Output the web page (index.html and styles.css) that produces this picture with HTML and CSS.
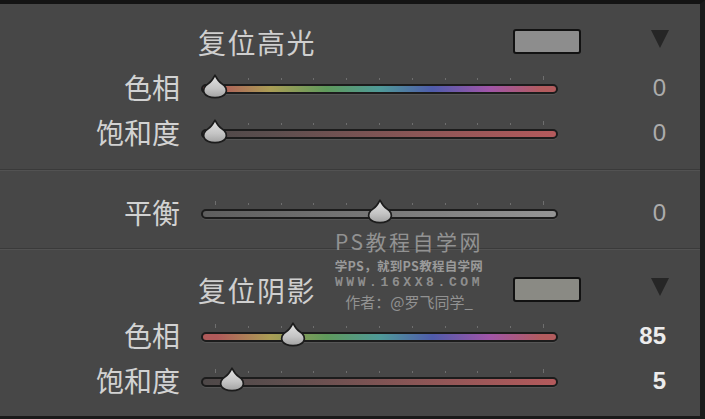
FILE: index.html
```html
<!DOCTYPE html>
<html lang="zh">
<head>
<meta charset="utf-8">
<link rel="stylesheet" href="styles.css">
</head>
<body>
<div class="panel">
  <section class="group g1">
    <div class="head">
      <span class="title">复位高光</span>
      <span class="swatch"></span>
      <span class="tri"></span>
    </div>
    <div class="row">
      <span class="label">色相</span>
      <div class="slider">
        <div class="ticks"><i class="tall"></i><i></i><i></i><i></i><i></i><i></i><i></i><i></i><i></i><i></i><i class="tall"></i></div>
        <div class="track hue"></div>
        <svg class="thumb" style="left:0px" viewBox="0 0 28 25" width="28" height="25"><use href="#thumb"/></svg>
      </div>
      <span class="val">0</span>
    </div>
    <div class="row">
      <span class="label">饱和度</span>
      <div class="slider">
        <div class="ticks"><i class="tall"></i><i></i><i></i><i></i><i></i><i></i><i></i><i></i><i></i><i></i><i class="tall"></i></div>
        <div class="track sat"></div>
        <svg class="thumb" style="left:0px" viewBox="0 0 28 25" width="28" height="25"><use href="#thumb"/></svg>
      </div>
      <span class="val">0</span>
    </div>
  </section>
  <div class="sep"></div>
  <section class="group g2">
    <div class="row">
      <span class="label">平衡</span>
      <div class="slider">
        <div class="ticks"><i class="tall"></i><i></i><i></i><i></i><i></i><i></i><i></i><i></i><i></i><i></i><i class="tall"></i></div>
        <div class="track bal"></div>
        <svg class="thumb" style="left:165px" viewBox="0 0 28 25" width="28" height="25"><use href="#thumb"/></svg>
      </div>
      <span class="val">0</span>
    </div>
  </section>
  <div class="sep"></div>
  <section class="group g3">
    <div class="head">
      <span class="title">复位阴影</span>
      <span class="swatch shadow"></span>
      <span class="tri"></span>
    </div>
    <div class="row">
      <span class="label">色相</span>
      <div class="slider">
        <div class="ticks"><i class="tall"></i><i></i><i></i><i></i><i></i><i></i><i></i><i></i><i></i><i></i><i class="tall"></i></div>
        <div class="track hue"></div>
        <svg class="thumb" style="left:78px" viewBox="0 0 28 25" width="28" height="25"><use href="#thumb"/></svg>
      </div>
      <span class="val strong">85</span>
    </div>
    <div class="row">
      <span class="label">饱和度</span>
      <div class="slider">
        <div class="ticks"><i class="tall"></i><i></i><i></i><i></i><i></i><i></i><i></i><i></i><i></i><i></i><i class="tall"></i></div>
        <div class="track sat"></div>
        <svg class="thumb" style="left:17px" viewBox="0 0 28 25" width="28" height="25"><use href="#thumb"/></svg>
      </div>
      <span class="val strong">5</span>
    </div>
  </section>

  <div class="watermark">
    <span class="wm1">PS教程自学网</span>
    <span class="wm2">学PS，就到PS教程自学网</span>
    <span class="wm3">WWW.16XX8.COM</span>
    <span class="wm4">作者：@罗飞同学_</span>
  </div>

  <svg class="defs" width="0" height="0">
    <defs>
      <linearGradient id="tg" x1="0" y1="0" x2="0" y2="1">
        <stop offset="0" stop-color="#e4e4e4"/>
        <stop offset="0.6" stop-color="#c4c4c4"/>
        <stop offset="1" stop-color="#a2a2a2"/>
      </linearGradient>
      <g id="thumb">
        <path d="M14 1.2 C15.5 4 17 7.5 20.5 9.5 C25 12 26.5 16 24.5 19.5 C22.5 22.6 18.5 23.6 14 23.6 C9.5 23.6 5.5 22.6 3.5 19.5 C1.5 16 3 12 7.5 9.5 C11 7.5 12.5 4 14 1.2 Z" fill="url(#tg)" stroke="#1c1c1c" stroke-width="1.7" stroke-linejoin="round"/>
      </g>
    </defs>
  </svg>
</div>
</body>
</html>
```

FILE: styles.css
```css
html, body {
  margin: 0;
  padding: 0;
  background: #474747;
}

.panel {
  position: relative;
  width: 705px;
  height: 419px;
  box-sizing: border-box;
  border-top: 4px solid #141414;
  border-right: 5px solid #1b1b1b;
  border-bottom: 3px solid #1a1a1a;
  background: #474747;
  overflow: hidden;
  font-family: "Noto Sans CJK SC", "Noto Sans", sans-serif;
}

.group {
  display: flex;
  flex-direction: column;
}

.g1 { padding: 15px 0 15px; }
.g2 { padding: 18px 0 14px; }
.g3 { padding: 17px 0 14px; }

.sep {
  height: 1px;
  background: #3a3a3a;
  border-bottom: 1px solid #525252;
}

.head {
  height: 45px;
  display: flex;
  align-items: center;
  padding-left: 198px;
}

.title {
  width: 315px;
  font-size: 28px;
  line-height: 1;
  color: #cfcfcf;
  letter-spacing: 1.5px;
}

.swatch {
  width: 68px;
  height: 25px;
  box-sizing: border-box;
  border: 2px solid #121212;
  border-radius: 3px;
  background: #8d8d8d;
}

.swatch.shadow {
  background: #8a8a84;
}

.tri {
  width: 0;
  height: 0;
  margin-left: 70px;
  margin-top: -5px;
  border-left: 9px solid transparent;
  border-right: 9px solid transparent;
  border-top: 18px solid #262626;
}

.row {
  height: 45px;
  display: grid;
  grid-template-columns: 201px 357px 108px;
  align-items: center;
}

.label {
  padding-right: 21px;
  text-align: right;
  font-size: 28px;
  line-height: 1;
  color: #d2d2d2;
}

.slider {
  position: relative;
  height: 45px;
  display: flex;
  flex-direction: column;
  justify-content: center;
  padding-bottom: 4px;
  box-sizing: border-box;
}

.ticks {
  display: flex;
  justify-content: space-between;
  align-items: flex-end;
  height: 4px;
  margin: 0 14px 4px 14px;
}

.ticks i {
  display: block;
  width: 1px;
  height: 2px;
  background: #6e6e6e;
}

.ticks i.tall {
  height: 4px;
}

.track {
  height: 10px;
  box-sizing: border-box;
  border: 2px solid #1c1c1c;
  border-radius: 5px;
  box-shadow: 0 1px 0 #555;
}

.track.hue {
  background: linear-gradient(to right,
    #b05a5a 0%, #b05a5a 4%, #aa9d55 19%, #5f9a5c 35%,
    #4f9a98 50%, #4f5cab 65%, #a055a8 81%, #b35c5e 96%, #b35c5e 100%);
}

.track.sat {
  background: linear-gradient(to right, #4e4848 0%, #5c4e4e 20%, #8a5656 60%, #b45a5c 100%);
}

.track.bal {
  background: linear-gradient(to right, #5e5e5e 0%, #7e7e7e 60%, #959595 100%);
}

.thumb {
  position: absolute;
  top: 10px;
  width: 28px;
  height: 25px;
}

.val {
  text-align: right;
  font-family: "Liberation Sans", Arial, sans-serif;
  font-size: 24px;
  line-height: 1;
  color: #acacac;
  padding-top: 2px;
}

.val.strong {
  font-weight: bold;
  color: #ececec;
}

.defs {
  position: absolute;
  width: 0;
  height: 0;
}

.watermark {
  position: absolute;
  left: 326px;
  top: 222px;
  width: 166px;
  display: flex;
  flex-direction: column;
  align-items: center;
  color: #929292;
}

.wm1 {
  font-size: 21px;
  letter-spacing: 2.5px;
  height: 31px;
  line-height: 31px;
}

.wm2 {
  font-size: 12.5px;
  font-weight: bold;
  height: 18px;
  line-height: 18px;
  color: #9a9a9a;
  letter-spacing: 0.3px;
}

.wm3 {
  font-family: "Liberation Mono", monospace;
  font-weight: bold;
  font-size: 13px;
  letter-spacing: 3.6px;
  height: 16px;
  line-height: 16px;
  color: #8e8e8e;
}

.wm4 {
  font-size: 15px;
  height: 22px;
  line-height: 22px;
}
```
